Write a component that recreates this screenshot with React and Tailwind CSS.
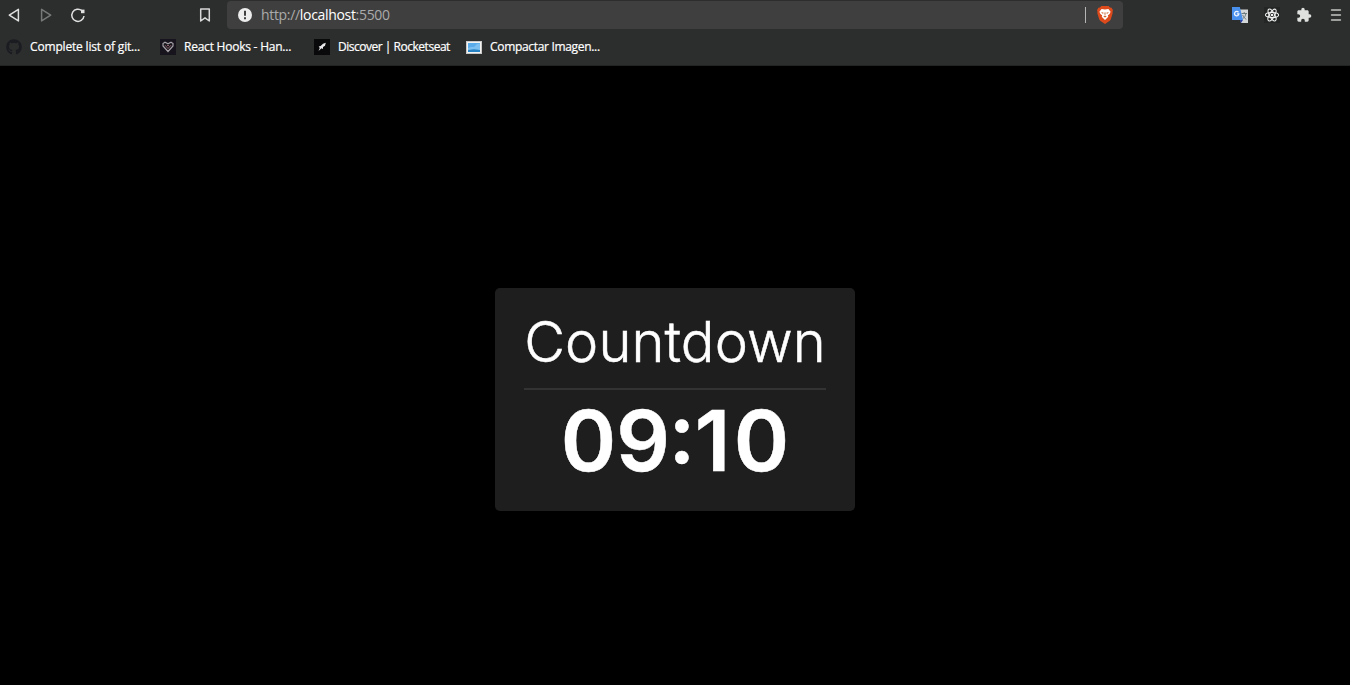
import React from "react";
import { FaGithub } from "react-icons/fa";
import { MdExtension } from "react-icons/md";

function HeartIcon() {
  return (
    <svg width="16" height="16" viewBox="0 0 16 16" className="shrink-0">
      <rect width="16" height="16" fill="#17141d" />
      <path d="M3 6V4.5L5 3.3l3 1.5 3-1.5 2 1.2V7L8 12.5 3 7z" fill="none" stroke="#a5a0a5" strokeWidth="1.2" />
      <path d="M5 6.2l3 3.4 3-3.4M7 7l1-1 1 1" fill="none" stroke="#986a6d" strokeWidth=".9" />
    </svg>
  );
}

function RocketIcon() {
  return (
    <svg width="16" height="16" viewBox="0 0 16 16" className="shrink-0">
      <rect width="16" height="16" fill="#09090b" />
      <path d="M11.8 3.8L11 6.8 9 8v2L7.5 9.2l-3 2.8 1.3-3L4.7 7.5l2-.6L9 4.7z" fill="#e9e9ed" />
    </svg>
  );
}

function ImageIcon() {
  return (
    <svg width="16" height="16" viewBox="0 0 16 16" className="shrink-0">
      <rect x="0" y="2" width="16" height="13" fill="#c9c9c9" />
      <rect x="1" y="3" width="14" height="11" fill="#f5f3ef" />
      <rect x="2" y="4" width="12" height="9" fill="#5aabea" />
      <path d="M2 9l3-1h3l3-3 3-.5V11H2z" fill="#7dc0f0" />
      <path d="M2 11l6-.8 6 .8v2H2z" fill="#2783c3" />
    </svg>
  );
}

function BraveIcon() {
  return (
    <svg width="16" height="18" viewBox="0 0 16 18" className="shrink-0">
      <path d="M4.4 0h7.2L13 1.5l1.6.2L16 4.2l-.5 1.5.2 1.4-1.9 6.2-1 1.5L8 18l-4.8-3.2-1-1.5L.3 7.1l.2-1.4L0 4.2l1.4-2.5L3 1.5z" fill="#dd4a1c" />
      <path d="M4.6 3L8 3.6l3.4-.6 2.2 2.7-1 2.3-1.8 1.5.5 1.3L8 14 4.7 10.8l.5-1.3L3.4 8l-1-2.3z" fill="#fff" />
      <path d="M4 6l2.7.7-.7 1.2zM12 6l-2.7.7.7 1.2zM7.4 6.6h1.2l-.3 3h-.6zM6.2 10.4L8 9.8l1.8.6L8 11.6z" fill="#c9602f" />
    </svg>
  );
}

function TranslateIcon() {
  return (
    <svg width="16" height="16" viewBox="0 0 16 16" className="shrink-0">
      <path d="M7 2.5h9V16H9z" fill="#d5d8d8" />
      <path d="M9.5 6.5h5.5M12.2 5v1.5M10.5 12c2-1.6 3-3 3.4-5.5M10.7 8c.8 2 2 3.4 3.6 4.3" fill="none" stroke="#6d7c80" />
      <path d="M8 13h3l-2 3z" fill="#283fa5" />
      <path d="M0 0h7.8L11 13H0z" fill="#4890ec" />
      <path d="M6.5 5.4A2.2 2.2 0 1 0 6.9 6.8H4.9" fill="none" stroke="#eef5ff" strokeWidth="1.3" />
    </svg>
  );
}

function AtomIcon() {
  return (
    <svg width="16" height="16" viewBox="0 0 16 16" className="shrink-0">
      <rect width="16" height="16" fill="#242525" />
      <g fill="none" stroke="#f2f2f2" strokeWidth="1.05">
        <ellipse cx="8" cy="8" rx="6.6" ry="2.6" />
        <ellipse cx="8" cy="8" rx="6.6" ry="2.6" transform="rotate(60 8 8)" />
        <ellipse cx="8" cy="8" rx="6.6" ry="2.6" transform="rotate(120 8 8)" />
      </g>
      <circle cx="8" cy="8" r="1.3" fill="#f2f2f2" />
    </svg>
  );
}

const bookmarks = [
  { text: "Complete list of git...", icon: <FaGithub size={16} color="#1b1c22" className="shrink-0" />, box: "w-[154px]", label: "tracking-[-0.17px]" },
  { text: "React Hooks - Han...", icon: <HeartIcon />, box: "w-[154px]", label: "tracking-[-0.23px]" },
  { text: "Discover | Rocketseat", icon: <RocketIcon />, box: "w-[152px]", label: "tracking-[-0.48px]" },
  { text: "Compactar Imagen...", icon: <ImageIcon />, box: "w-[154px]", label: "tracking-[-0.32px]" },
];

function Toolbar() {
  return (
    <div className="flex h-[30px] items-center">
      <div className="flex w-[227px] items-center pl-[6px]">
        <svg width="16" height="16" viewBox="0 0 16 16" className="mr-4">
          <path d="M3.3 8.1L12.4 2.3v11.6z" fill="none" stroke="#e0e0e0" strokeWidth="1.5" strokeLinejoin="round" />
        </svg>
        <svg width="16" height="16" viewBox="0 0 16 16" className="mr-4">
          <path d="M12.7 8.1L3.6 2.3v11.6z" fill="none" stroke="#777878" strokeWidth="1.5" strokeLinejoin="round" />
        </svg>
        <svg width="16" height="16" viewBox="0 0 16 16">
          <path d="M12 3.7A6.1 6.1 0 1 0 14 9" fill="none" stroke="#e0e0e0" strokeWidth="1.5" />
          <path d="M11 2.6h3.5V6.2H11z" fill="#e0e0e0" />
        </svg>
        <svg width="16" height="16" viewBox="0 0 16 16" className="ml-[111px]">
          <path d="M3.7 2h8.6v12L8 10.8 3.7 14z" fill="none" stroke="#d8d8d8" strokeWidth="1.5" strokeLinejoin="round" />
        </svg>
      </div>
      <div className="flex h-[28px] w-[896px] items-center rounded-[4px] bg-[#3f3f3f] pl-[11px] pr-[10px]">
        <svg width="14" height="14" viewBox="0 0 14 14">
          <circle cx="7" cy="7" r="7" fill="#ededed" />
          <path d="M6 2.7h2v5H6zM6 9.2h2v2H6z" fill="#3f3f3f" />
        </svg>
        <span className="ml-[9px] whitespace-nowrap font-['Open_Sans','Noto_Sans',sans-serif] text-[14px] leading-[20px] tracking-[-0.32px] text-[#aaaaaa]">
          http://<span className="text-white">localhost</span>:5500
        </span>
        <div className="ml-auto mr-[11px] h-4 w-px bg-[#b5b5b5]" />
        <BraveIcon />
      </div>
      <div className="ml-auto flex items-center gap-4 pr-[6px]">
        <TranslateIcon />
        <AtomIcon />
        <MdExtension size={16} color="#dfe1df" />
        <svg width="16" height="16" viewBox="0 0 16 16">
          <path d="M3.6 3h8.8M3.6 8h8.8M3.6 13h8.8" stroke="#c4c6c4" strokeWidth="1.6" strokeLinecap="round" />
        </svg>
      </div>
    </div>
  );
}

export default function App() {
  return (
    <div className="flex h-[685px] w-[1350px] flex-col overflow-hidden bg-black">
      <header className="h-[66px] border-b border-[#222424] bg-[#2c2e2d]">
        <Toolbar />
        <nav className="flex h-[34px] items-center pl-[6px]">
          {bookmarks.map((b) => (
            <div key={b.text} className={"flex shrink-0 items-center gap-2 " + b.box}>
              {b.icon}
              <span className={"whitespace-nowrap font-['Open_Sans','Noto_Sans',sans-serif] text-[12px] leading-4 text-white [-webkit-text-stroke:0.2px_white] " + b.label}>
                {b.text}
              </span>
            </div>
          ))}
        </nav>
      </header>
      <main className="flex flex-1 flex-col items-center pt-[222px]">
        <section className="flex h-[223px] w-[360px] flex-col items-center rounded-[5px] bg-[#1e1e1e] px-[29px] pt-5 font-['Inter',sans-serif] text-white">
          <h1 className="flex h-[80px] w-[302px] items-start justify-center whitespace-nowrap text-[56px] font-light leading-[68px] tracking-[0.1px] [-webkit-text-stroke:0.5px_white]">
            Countdown
          </h1>
          <div className="h-[2px] w-[302px] shrink-0 bg-[#333333]" />
          <div className="whitespace-nowrap text-[84px] font-semibold leading-[102px] [-webkit-text-stroke:0.5px_white] [font-feature-settings:'calt'_0]">
            0<span className="tracking-[-1.5px]">9</span>
            <span className="align-[8px] leading-none tracking-[-0.5px]">:</span>
            <span className="tracking-[3.5px]">1</span>0
          </div>
        </section>
      </main>
    </div>
  );
}
